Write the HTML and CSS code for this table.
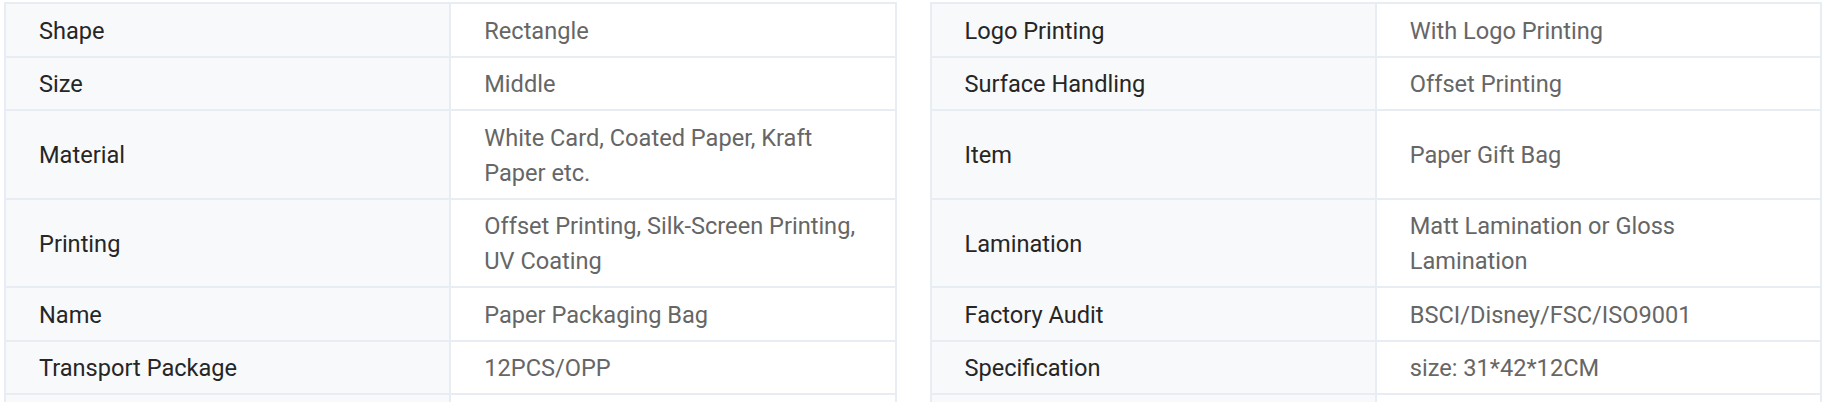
FILE: index.html
```html
<!DOCTYPE html>
<html>
<head>
    <meta charset="UTF-8">
    <title>Product Attributes</title>
    <link rel="stylesheet" href="styles.css">
</head>
<body>
    <div class="attr-grid">
        <div class="attr-pair"><div class="attr-name">Shape</div><div class="attr-value">Rectangle</div></div>
        <div class="attr-pair"><div class="attr-name">Logo Printing</div><div class="attr-value">With Logo Printing</div></div>

        <div class="attr-pair"><div class="attr-name">Size</div><div class="attr-value">Middle</div></div>
        <div class="attr-pair"><div class="attr-name">Surface Handling</div><div class="attr-value">Offset Printing</div></div>

        <div class="attr-pair"><div class="attr-name">Material</div><div class="attr-value">White Card, Coated Paper, Kraft Paper etc.</div></div>
        <div class="attr-pair"><div class="attr-name">Item</div><div class="attr-value">Paper Gift Bag</div></div>

        <div class="attr-pair"><div class="attr-name">Printing</div><div class="attr-value">Offset Printing, Silk-Screen Printing, UV Coating</div></div>
        <div class="attr-pair"><div class="attr-name">Lamination</div><div class="attr-value">Matt Lamination or Gloss Lamination</div></div>

        <div class="attr-pair"><div class="attr-name">Name</div><div class="attr-value">Paper Packaging Bag</div></div>
        <div class="attr-pair"><div class="attr-name">Factory Audit</div><div class="attr-value">BSCI/Disney/FSC/ISO9001</div></div>

        <div class="attr-pair"><div class="attr-name">Transport Package</div><div class="attr-value">12PCS/OPP</div></div>
        <div class="attr-pair"><div class="attr-name">Specification</div><div class="attr-value">size: 31*42*12CM</div></div>

        <div class="attr-pair"><div class="attr-name">&nbsp;</div><div class="attr-value">&nbsp;</div></div>
        <div class="attr-pair"><div class="attr-name">&nbsp;</div><div class="attr-value">&nbsp;</div></div>
    </div>
</body>
</html>
```

FILE: styles.css
```css
:root {
    --border-color: #e8edf4;
    --label-bg: #f8f9fb;
    --label-color: #262626;
    --value-color: #666;
}
body {
    font-family: Roboto, "Liberation Sans", Arial, sans-serif;
    font-size: 23.6px;
    background-color: #fff;
    margin: 0;
    padding: 0;
    height: 100vh;
    overflow: hidden;
}
.attr-grid {
    display: grid; grid-template-columns: 1fr 1fr; column-gap: 33px;
    padding: 2px 6px 0 4px;
}
.attr-pair {
    display: grid; grid-template-columns: 1fr 1fr;
    border-left: 2px solid var(--border-color);
}
.attr-pair:nth-child(-n+2) { border-top: 2px solid var(--border-color); }
.attr-name, .attr-value {
    display: flex; align-items: center;
    padding: 9.75px 33px 6.75px; line-height: 35px;
    border-right: 2px solid var(--border-color);
    border-bottom: 2px solid var(--border-color);
}
.attr-name { background-color: var(--label-bg); color: var(--label-color); }
.attr-value { background-color: #fff; color: var(--value-color); }
```
